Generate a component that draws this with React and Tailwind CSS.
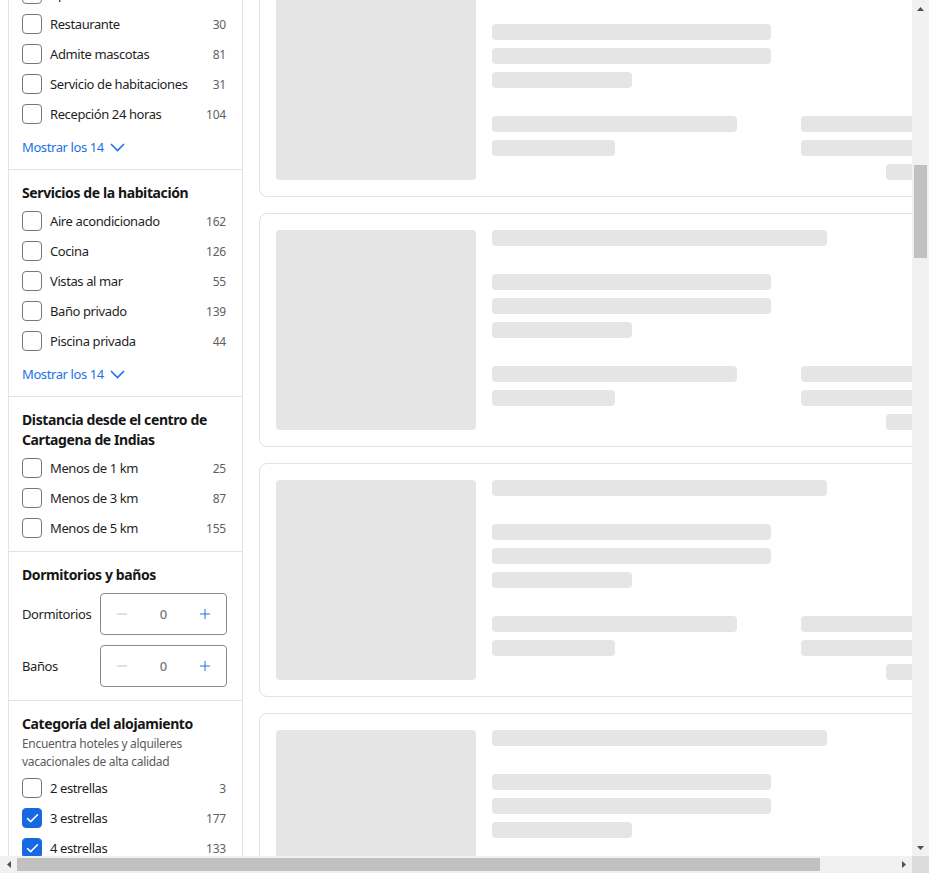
import { Check, Minus, Plus } from "lucide-react";

const amenities = [
  ["Aparcamiento", 52],
  ["Restaurante", 30],
  ["Admite mascotas", 81],
  ["Servicio de habitaciones", 31],
  ["Recepción 24 horas", 104],
];

const roomServices = [
  ["Aire acondicionado", 162],
  ["Cocina", 126],
  ["Vistas al mar", 55],
  ["Baño privado", 139],
  ["Piscina privada", 44],
];

const distances = [
  ["Menos de 1 km", 25],
  ["Menos de 3 km", 87],
  ["Menos de 5 km", 155],
];

const stars = [
  ["2 estrellas", 3, false],
  ["3 estrellas", 177, true],
  ["4 estrellas", 133, true],
];

function FilterRow({ label, count, checked }) {
  return (
    <label className="flex h-[30px] items-center">
      <span
        className={`mr-2 flex h-5 w-5 shrink-0 items-center justify-center rounded-[4px] border ${
          checked ? "border-[#1668e3] bg-[#1668e3]" : "border-[#777] bg-white"
        }`}
      >
        {checked ? <Check size={15} strokeWidth={2.5} className="text-white" /> : null}
      </span>
      <span className="flex-1 pt-px text-[13px] tracking-[-0.4px] text-[#1f1f1f]">{label}</span>
      <span className="pt-px pr-px text-[12px] tracking-[-0.2px] text-[#616161]">{count}</span>
    </label>
  );
}

function ShowMore() {
  return (
    <button type="button" className="mt-2 flex h-5 items-center gap-[6px] pt-px text-[13px] tracking-[-0.4px] text-[#1a73e8]">
      Mostrar los 14
      <svg width="15" height="9" viewBox="0 0 15 9" fill="none">
        <polyline points="1,1 7.5,7.5 14,1" stroke="#1a73e8" strokeWidth="1.6" />
      </svg>
    </button>
  );
}

function Stepper({ label }) {
  return (
    <div className="flex items-center">
      <span className="w-[78px] pt-px text-[13px] tracking-[-0.4px] text-[#1f1f1f]">{label}</span>
      <div className="flex h-[42px] flex-1 items-center justify-between rounded-[4px] border border-[#8a8a8a] px-[13px]">
        <Minus size={16} strokeWidth={1.5} className="text-[#c4c4c4]" />
        <span className="pt-px text-[13px] font-medium text-[#7a7a7a]">0</span>
        <Plus size={16} strokeWidth={1.5} className="text-[#1a73e8]" />
      </div>
    </div>
  );
}

function Title({ children }) {
  return (
    <h3 className="-mb-px pt-px text-[14px] leading-5 font-bold tracking-[-0.4px] text-[#161616]">{children}</h3>
  );
}

function Sidebar() {
  return (
    <aside className="-mt-[21px] w-[235px] shrink-0 border-x border-[#e4e4e4] bg-white">
      <section className="border-b border-[#e4e4e4] pb-3 pl-[13px] pr-[15px]">
        {amenities.map(([label, count]) => (
          <FilterRow key={label} label={label} count={count} />
        ))}
        <ShowMore />
      </section>

      <section className="border-b border-[#e4e4e4] pb-3 pl-[13px] pr-[15px] pt-3">
        <Title>Servicios de la habitación</Title>
        <div className="mt-1">
          {roomServices.map(([label, count]) => (
            <FilterRow key={label} label={label} count={count} />
          ))}
        </div>
        <ShowMore />
      </section>

      <section className="border-b border-[#e4e4e4] pb-2 pl-[13px] pr-[15px] pt-3">
        <Title>Distancia desde el centro de Cartagena de Indias</Title>
        <div className="mt-1">
          {distances.map(([label, count]) => (
            <FilterRow key={label} label={label} count={count} />
          ))}
        </div>
      </section>

      <section className="border-b border-[#e4e4e4] pb-[13px] pl-[13px] pr-[15px] pt-3">
        <Title>Dormitorios y baños</Title>
        <div className="mt-[9px] flex flex-col gap-[10px]">
          <Stepper label="Dormitorios" />
          <Stepper label="Baños" />
        </div>
      </section>

      <section className="pb-3 pl-[13px] pr-[15px] pt-3">
        <Title>Categoría del alojamiento</Title>
        <p className="-mb-[2px] pt-[2px] text-[12px] leading-[18px] tracking-[-0.3px] text-[#5c5c5c]">
          Encuentra hoteles y alquileres vacacionales de alta calidad
        </p>
        <div className="mt-1">
          {stars.map(([label, count, checked]) => (
            <FilterRow key={label} label={label} count={count} checked={checked} />
          ))}
        </div>
      </section>
    </aside>
  );
}

function Bar({ className }) {
  return <div className={`h-4 rounded-[4px] bg-[#e5e5e5] ${className}`} />;
}

function SkeletonCard() {
  return (
    <div className="flex rounded-[8px] border border-[#e2e2e2] bg-white p-4">
      <div className="h-[200px] w-[200px] shrink-0 rounded-[4px] bg-[#e5e5e5]" />
      <div className="ml-4 flex flex-1 flex-col">
        <Bar className="w-[335px]" />
        <div className="mt-7 flex flex-col gap-2">
          <Bar className="w-[279px]" />
          <Bar className="w-[279px]" />
          <Bar className="w-[140px]" />
        </div>
        <div className="mt-7 flex justify-between">
          <div className="flex flex-col gap-2">
            <Bar className="w-[245px]" />
            <Bar className="w-[123px]" />
          </div>
          <div className="flex w-[171px] flex-col items-end gap-2">
            <Bar className="w-full" />
            <Bar className="w-full" />
            <Bar className="w-[86px]" />
          </div>
        </div>
      </div>
    </div>
  );
}

function Arrow({ dir }) {
  const points = {
    up: "0,4 7,4 3.5,0",
    down: "0,0 7,0 3.5,4",
    left: "4,0 4,7 0,3.5",
    right: "0,0 0,7 4,3.5",
  }[dir];
  const vertical = dir === "up" || dir === "down";
  return (
    <svg width={vertical ? 7 : 4} height={vertical ? 4 : 7} viewBox={vertical ? "0 0 7 4" : "0 0 4 7"}>
      <polygon points={points} fill="#505050" />
    </svg>
  );
}

export default function App() {
  return (
    <div className="flex h-[873px] w-[929px] flex-col overflow-hidden bg-white font-['Noto_Sans',sans-serif]">
      <div className="flex h-[856px]">
        <div className="flex flex-1 gap-4 overflow-hidden pl-2">
          <Sidebar />
          <main className="-mt-[37px] flex w-[730px] shrink-0 flex-col gap-4">
            <SkeletonCard />
            <SkeletonCard />
            <SkeletonCard />
            <SkeletonCard />
          </main>
        </div>
        <div className="flex w-[17px] shrink-0 flex-col bg-[#f1f1f1]">
          <div className="flex h-[17px] items-center justify-center">
            <Arrow dir="up" />
          </div>
          <div className="flex-1 px-[2px] pt-[148px]">
            <div className="h-[93px] bg-[#c1c1c1]" />
          </div>
          <div className="flex h-[17px] items-center justify-center">
            <Arrow dir="down" />
          </div>
        </div>
      </div>
      <div className="flex h-[17px]">
        <div className="flex flex-1 bg-[#f1f1f1]">
          <div className="flex w-[17px] items-center justify-center">
            <Arrow dir="left" />
          </div>
          <div className="flex flex-1 items-center">
            <div className="h-[13px] w-[803px] bg-[#c1c1c1]" />
          </div>
          <div className="flex w-[17px] items-center justify-center">
            <Arrow dir="right" />
          </div>
        </div>
        <div className="w-[17px] bg-[#dcdcdc]" />
      </div>
    </div>
  );
}
